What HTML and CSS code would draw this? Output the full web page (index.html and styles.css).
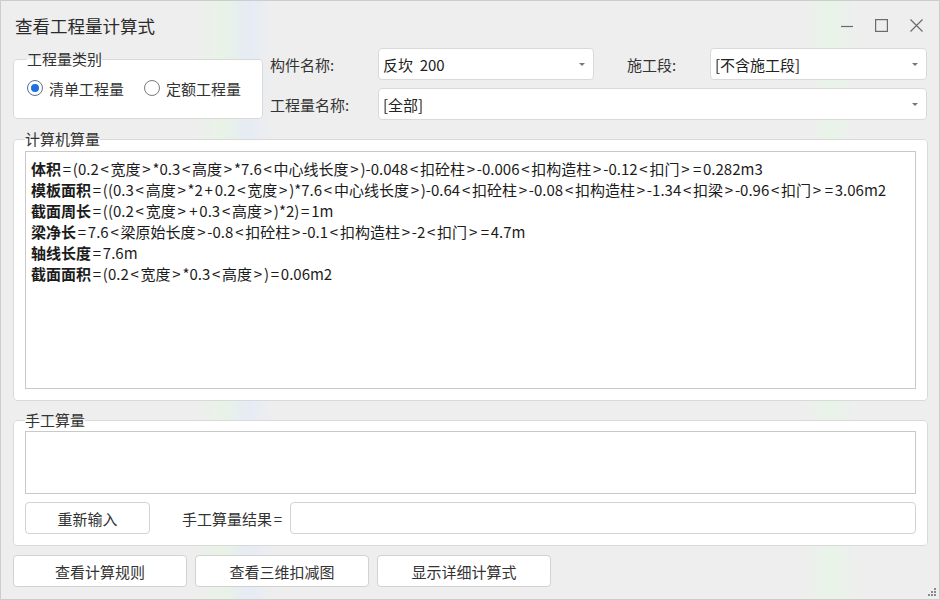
FILE: index.html
```html
<!DOCTYPE html>
<html lang="zh-CN">
<head>
    <meta charset="UTF-8">
    <meta name="viewport" content="width=device-width, initial-scale=1.0">
    <title>查看工程量计算式</title>
    <link rel="stylesheet" href="styles.css">
</head>
<body>
    <div class="window">
        <div class="titlebar">
            <span class="title">查看工程量计算式</span>
            <div class="controls">
                <svg width="12" height="12" viewBox="0 0 12 12"><path d="M0 7.5H12" stroke="#6b6b6b" stroke-width="1.2"/></svg>
                <svg width="13" height="13" viewBox="0 0 13 13"><rect x="0.6" y="0.6" width="11.8" height="11.8" fill="none" stroke="#6b6b6b" stroke-width="1.2"/></svg>
                <svg width="13" height="13" viewBox="0 0 13 13"><path d="M0.5 0.5L12.5 12.5M12.5 0.5L0.5 12.5" stroke="#6b6b6b" stroke-width="1.2"/></svg>
            </div>
        </div>

        <div class="top">
            <fieldset class="group kind">
                <legend>工程量类别</legend>
                <div class="radios">
                    <label class="radio"><span class="dot checked"></span>清单工程量</label>
                    <label class="radio"><span class="dot"></span>定额工程量</label>
                </div>
            </fieldset>
            <div class="fields">
                <span class="label">构件名称:</span>
                <div class="select"><span>反坎&nbsp;&nbsp;200</span><i class="arrow"></i></div>
                <span class="label stage">施工段:</span>
                <div class="select"><span>[不含施工段]</span><i class="arrow"></i></div>
                <span class="label">工程量名称:</span>
                <div class="select wide"><span>[全部]</span><i class="arrow"></i></div>
            </div>
        </div>

        <fieldset class="group calc">
            <legend>计算机算量</legend>
            <div class="textbox formulas">
                <div><b>体积</b><i>=</i>(0.2<i>&lt;</i>宽度<i>&gt;</i>*0.3<i>&lt;</i>高度<i>&gt;</i>*7.6<i>&lt;</i>中心线长度<i>&gt;</i>)-0.048<i>&lt;</i>扣砼柱<i>&gt;</i>-0.006<i>&lt;</i>扣构造柱<i>&gt;</i>-0.12<i>&lt;</i>扣门<i>&gt;</i><i>=</i>0.282m3</div>
                <div><b>模板面积</b><i>=</i>((0.3<i>&lt;</i>高度<i>&gt;</i>*2<i>+</i>0.2<i>&lt;</i>宽度<i>&gt;</i>)*7.6<i>&lt;</i>中心线长度<i>&gt;</i>)-0.64<i>&lt;</i>扣砼柱<i>&gt;</i>-0.08<i>&lt;</i>扣构造柱<i>&gt;</i>-1.34<i>&lt;</i>扣梁<i>&gt;</i>-0.96<i>&lt;</i>扣门<i>&gt;</i><i>=</i>3.06m2</div>
                <div><b>截面周长</b><i>=</i>((0.2<i>&lt;</i>宽度<i>&gt;</i><i>+</i>0.3<i>&lt;</i>高度<i>&gt;</i>)*2)<i>=</i>1m</div>
                <div><b>梁净长</b><i>=</i>7.6<i>&lt;</i>梁原始长度<i>&gt;</i>-0.8<i>&lt;</i>扣砼柱<i>&gt;</i>-0.1<i>&lt;</i>扣构造柱<i>&gt;</i>-2<i>&lt;</i>扣门<i>&gt;</i><i>=</i>4.7m</div>
                <div><b>轴线长度</b><i>=</i>7.6m</div>
                <div><b>截面面积</b><i>=</i>(0.2<i>&lt;</i>宽度<i>&gt;</i>*0.3<i>&lt;</i>高度<i>&gt;</i>)<i>=</i>0.06m2</div>
            </div>
        </fieldset>

        <fieldset class="group manual">
            <legend>手工算量</legend>
            <div class="textbox manual-input"></div>
            <div class="result-row">
                <button class="btn reinput">重新输入</button>
                <span class="label result-label">手工算量结果<i class="eq">=</i></span>
                <div class="input"></div>
            </div>
        </fieldset>

        <div class="actions">
            <button class="btn action">查看计算规则</button>
            <button class="btn action">查看三维扣减图</button>
            <button class="btn action">显示详细计算式</button>
        </div>

        <svg class="grip" width="9" height="9" viewBox="0 0 9 9">
            <rect x="7" y="1" width="2" height="2" fill="#8a8a8a"/>
            <rect x="4" y="4" width="2" height="2" fill="#8a8a8a"/>
            <rect x="7" y="4" width="2" height="2" fill="#8a8a8a"/>
            <rect x="1" y="7" width="2" height="2" fill="#8a8a8a"/>
            <rect x="4" y="7" width="2" height="2" fill="#8a8a8a"/>
            <rect x="7" y="7" width="2" height="2" fill="#8a8a8a"/>
        </svg>
    </div>
</body>
</html>
```

FILE: styles.css
```css
body{
    margin: 0;
    font-family: "Noto Sans CJK SC", "Noto Sans", sans-serif;
    font-size: 15px;
    color: #333;
}
.window{
    position: relative;
    width: 940px;
    height: 600px;
    box-sizing: border-box;
    border: 1px solid #cdcdcd;
    padding: 0 11px 0 12px;
    background-color: #eeeeee;
    background-image: linear-gradient(90deg, #eeeeee 0, #eeeeee 195px, #e8f3e6 222px, #e6ebf5 248px, #eeeeee 272px, #eeeeee 805px, #e8f4e8 830px, #eeeeee 856px);
}
.titlebar{
    height: 47px;
    display: flex;
    align-items: center;
    justify-content: space-between;
}
.title{
    font-size: 17.5px;
    margin-left: 2px;
    margin-top: 1px;
    color: #2a2a2a;
}
.controls{
    display: flex;
    align-items: center;
    gap: 22px;
    margin-right: 5px;
    margin-top: 1px;
}

.group{
    margin: 0;
    border: 1px solid #d9d9d9;
    border-radius: 4px;
    background-color: #fff;
    min-width: 0;
}
.group legend{
    padding: 0;
    line-height: 20px;
    color: #333;
}

.top{
    display: flex;
    align-items: flex-start;
}
.kind{
    width: 250px;
    box-sizing: border-box;
    margin-top: 1px;
    padding: 0 0 11px 13px;
}
.radios{
    height: 38px;
    display: flex;
    align-items: center;
    gap: 20px;
}
.radio{
    display: flex;
    align-items: center;
    gap: 6px;
}
.dot{
    width: 16px;
    height: 16px;
    box-sizing: border-box;
    border: 1px solid #7a7a7a;
    border-radius: 50%;
    background: #fff;
    display: flex;
    align-items: center;
    justify-content: center;
}
.dot.checked{
    border-color: #5c6f8c;
}
.dot.checked::after{
    content: "";
    width: 8px;
    height: 8px;
    border-radius: 50%;
    background: #1f6fe0;
}

.fields{
    margin-left: 7px;
    display: grid;
    grid-template-columns: 108px 216px 116px 217px;
    grid-auto-rows: 32px;
    row-gap: 8px;
    align-items: center;
}
.label{
    color: #333;
}
.stage{
    padding-left: 33px;
}
.select{
    height: 32px;
    box-sizing: border-box;
    border: 1px solid #d9d9d9;
    border-radius: 4px;
    background: #fff;
    display: flex;
    align-items: center;
    justify-content: space-between;
    padding: 0 8px 0 4px;
    color: #222;
}
.wide{
    grid-column: 2 / 5;
}
.arrow{
    width: 0;
    height: 0;
    border-left: 3px solid transparent;
    border-right: 3px solid transparent;
    border-top: 3px solid #777;
}

.calc{
    margin-top: 9px;
    padding: 2px 11px 11px 11px;
}
.textbox{
    box-sizing: border-box;
    border: 1px solid #c9c9c9;
    background: #fff;
}
.formulas{
    height: 238px;
    padding: 6px 5px;
    line-height: 21px;
    color: #1c1c1c;
    white-space: nowrap;
}
.formulas b{
    font-weight: bold;
}
.formulas i, .eq{
    font-style: normal;
    margin: 0 1.75px;
}
.eq{
    margin-right: 0;
}

.manual{
    margin-top: 9px;
    padding: 1px 11px 11px 11px;
}
.manual-input{
    height: 63px;
}
.result-row{
    margin-top: 8px;
    display: flex;
    align-items: center;
}
.btn{
    height: 32px;
    box-sizing: border-box;
    border: 1px solid #d2d2d2;
    border-radius: 4px;
    background: #fff;
    font-family: inherit;
    font-size: 15px;
    color: #333;
    padding: 0;
}
.reinput{
    width: 125px;
}
.result-label{
    margin-left: 32px;
    margin-right: 8px;
}
.input{
    flex: 1;
    height: 32px;
    box-sizing: border-box;
    border: 1px solid #d2d2d2;
    border-radius: 4px;
    background: #fff;
}

.actions{
    margin-top: 9px;
    display: flex;
    gap: 8px;
}
.action{
    width: 174px;
}

.grip{
    position: absolute;
    right: 3px;
    bottom: 3px;
}
```
